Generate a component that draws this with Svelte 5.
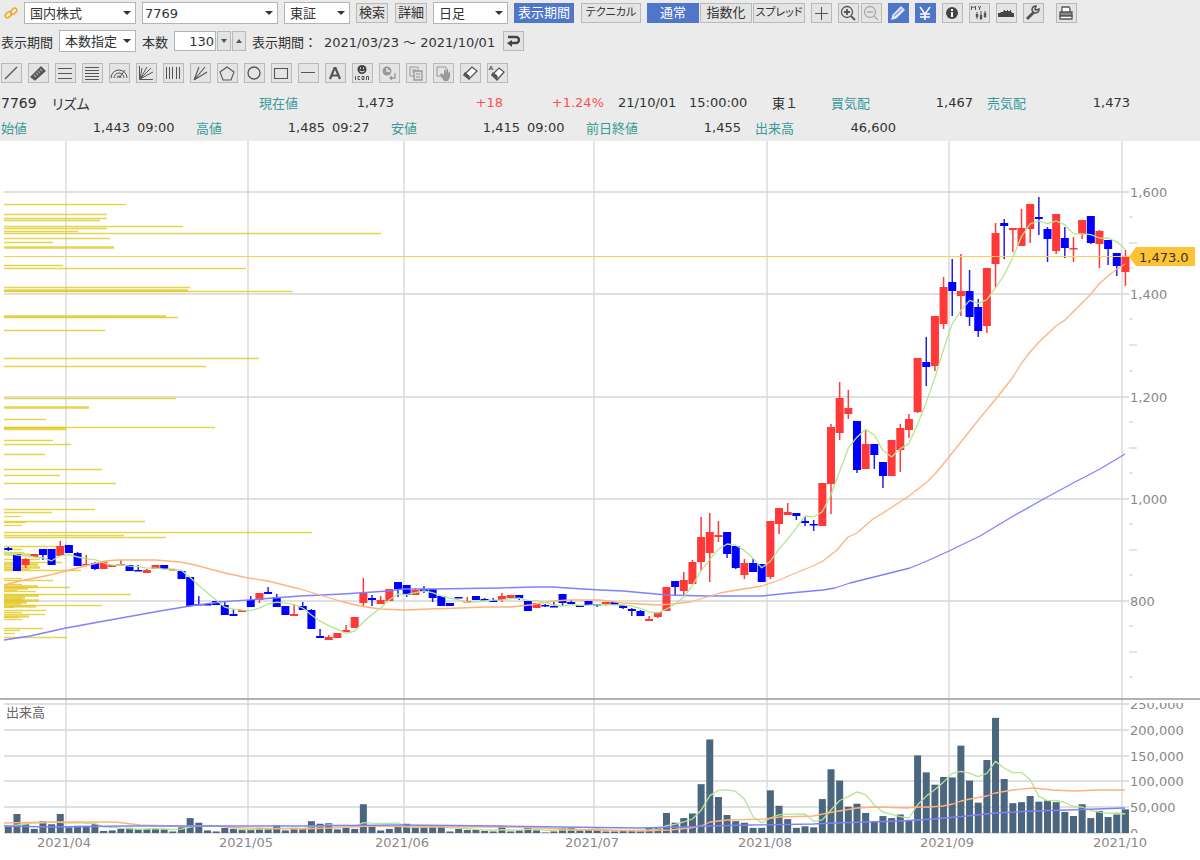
<script lang="ts">
  type Candle = [dir: 'u' | 'd', high: number, top: number, bottom: number, low: number];
  type Tool = { label: string; icon: string; state?: 'on' | 'off' };

  // Horizontal position of a trading day on the chart
  const STEP = 8.66;
  const dayX = (i: number) => 8.3 + i * STEP;

  const VOLUME_BASE = 833;
  const VOLUME_SCALE = 0.514; // chart units per thousand shares

  const tools: Tool[] = [
    { label: 'トレンドライン', icon: '<path d="M3 15 15 3"/>' },
    { label: 'チャネル', icon: '<path d="M2 13 12 3l4 4L6 16z" fill="#555"/><path d="m5 11 2 2m0-4 2 2m0-4 2 2m0-4 2 2" stroke="#aaa"/>' },
    { label: '三等分線', icon: '<path d="M2 4.500h14M2 9.500h14M2 14.500h14" stroke-width="1"/>' },
    { label: 'リトレースメント', icon: '<path d="M2 3.500h14M2 6.500h14M2 9.500h14M2 12.500h14M2 15.500h14" stroke-width="1"/>' },
    { label: 'ファン・アーク', icon: '<path d="M1 14a8 8 0 0 1 16 0M4 14a5 5 0 0 1 10 0M7 14a2 2 0 0 1 4 0M9 14l6-8" stroke-width="1"/>' },
    { label: 'ギャンアングル', icon: '<path d="M2.500 2v13.500H16M3 15 5 4M3 15l7-12M3 15 14 4M3 15l13-7" stroke-width="1"/>' },
    { label: 'タイムゾーン', icon: '<path d="M2.500 3v12M5.500 3v12M8.500 3v12M12.500 3v12M15.500 3v12" stroke-width="1"/>' },
    { label: 'ファンライン', icon: '<path d="M3 16 8 3M3 16 14 3M3 16l13-8" stroke-width="1.1"/>' },
    { label: '五角形', icon: '<path d="m9 3 7 5-3 8H5L2 8z" stroke-width="1.1"/>' },
    { label: '円', icon: '<circle cx="9" cy="9" r="6"/>' },
    { label: '四角形', icon: '<path d="M2.500 4.500h13v10h-13z" stroke-width="1.1"/>' },
    { label: '水平線', icon: '<path d="M2 8.500h14" stroke-width="1"/>' },
    { label: 'テキスト', icon: '<path d="M4 15 8.500 4h1L14 15M6 11.500h6" stroke-width="2.200"/>' },
    {
      label: 'アイコン',
      icon: '<circle cx="9" cy="5.500" r="4.500" fill="#444" stroke="none"/><path d="M7.500 3.500V5m3-1.500V5M6.500 7q2.500 2 5 0" stroke="#eee" stroke-width="1"/><path d="M2.500 12v4M7 12.500H5v3h2M9 12.500h2v3H9zM13.500 16v-3.500h2V16" stroke-width="1"/>'
    },
    { label: '元に戻す', icon: '<circle cx="7" cy="7" r="4.500" fill="#999" stroke="none"/><path d="M7 4v3h3" stroke="#eee"/><path d="M15 9v5h-5m2-2-2 2 2 2" stroke="#999"/>', state: 'off' },
    { label: 'コピー', icon: '<path d="M3 3h8v9H3zM5 6h4M5 8h3" stroke="#999" stroke-width="1"/><path d="M7 7h8v9H7z" fill="#ddd" stroke="#999"/><path d="M9 10h4m-4 3h4" stroke="#999" stroke-width="1"/>', state: 'off' },
    { label: '移動', icon: '<path d="M3 3h9v9H3z" stroke="#999" stroke-width="1"/><path d="m7 9 3 2V6h1l1 3 1-4h1v4l2-2v6l-2 4h-4l-4-6z" fill="#999" stroke="none"/>', state: 'off' },
    { label: '消去', icon: '<path d="m3 11 8-8 5 4-8 8z" fill="#fff"/><path d="m3 11 5 4v-3L4 9z" fill="#555"/>' },
    { label: '全消去', icon: '<path d="m4 11 7-7 5 4-7 8z" fill="#fff"/><path d="m4 11 5 4v-3L5 9z" fill="#555"/><path d="m1 6 2-4 2 4M2 5h2" stroke-width="1"/>' }
  ];

  const zoomTools: Tool[] = [
    { label: '拡大', icon: '<circle cx="8" cy="8" r="5.500"/><path d="M8 5v6M5 8h6m1 4 4 4" stroke-width="1.8"/>' },
    { label: '縮小', icon: '<circle cx="8" cy="8" r="5.500" stroke="#aaa"/><path d="M5 8h6m1 4 4 4" stroke="#aaa"/>', state: 'off' }
  ];

  const viewTools: Tool[] = [
    { label: '描画', icon: '<path d="m3 15 1-4 8-8 3 3-8 8z" fill="#dfe7ff" stroke="#dfe7ff"/><path d="m5 12 8-7" stroke="#86a0dc"/>', state: 'on' },
    { label: '現在値ライン', icon: '<path d="m4 3 5 7 5-7M9 9v7M4 10h10M4 13h10" stroke="#fff" stroke-width="1.5"/>', state: 'on' },
    { label: '情報', icon: '<circle cx="9" cy="9" r="6" fill="#444" stroke="none"/><path d="M9 8v5M9 5v2" stroke="#fff" stroke-width="2"/>' },
    {
      label: 'マイチャート',
      icon: '<path d="M1.500 6V2l2 2 2-2v4M8 2l1.500 2L11 2M9.500 4v2" stroke-width="1"/><path d="M7 8v7m4-8v9m4-9v7" stroke-width="1"/><path d="M7 10v3m4-2v4m4-6v4" stroke-width="2.4"/>'
    },
    { label: '価格帯別出来高', icon: '<path d="M1 13V9h2l1-1h2l1-2h1v1h2V6h1v1h2V6h1v2h1v1h2v4z" fill="#444" stroke="none"/>' },
    { label: '設定', icon: '<path d="m3 15 7-7" stroke-width="3"/><path d="M15 5a3.500 3.500 0 1 1-3-3l-1 3 1 1z" fill="#ddd" stroke-width="1.600"/>' }
  ];

  const printIcon = '<path d="M5 8V3h7l1 2v3" fill="#fff"/><path d="M3 8h12v4H3z" fill="#888"/><path d="M3 12h12v3H3z" fill="#fff"/>';

  const candles: Candle[] = [
    ['d', 547, 548, 550, 551], ['d', 554, 554, 571, 571], ['u', 558, 559, 565, 568], ['u', 554, 554, 557, 557],
    ['d', 549, 549, 555, 560], ['d', 549, 549, 565, 565], ['u', 541, 546, 556, 556], ['d', 545, 545, 553, 553],
    ['d', 552, 553, 566, 566], ['u', 555, 564, 565, 565], ['d', 562, 563, 569, 570], ['u', 562, 562, 569, 569],
    ['u', 565, 565, 567, 567], ['u', 560, 564, 565, 565], ['d', 565, 565, 571, 571], ['d', 565, 570, 571, 571],
    ['u', 569, 570, 573, 573], ['u', 565, 565, 569, 569], ['d', 565, 565, 569, 569], ['u', 569, 569, 570, 570],
    ['d', 571, 571, 579, 579], ['d', 577, 577, 606, 607], ['d', 596, 604, 605, 605], ['d', 603, 604, 605, 605],
    ['d', 601, 601, 605, 605], ['d', 602, 605, 615, 615], ['d', 609, 614, 616, 616], ['u', 610, 610, 612, 612],
    ['d', 596, 600, 607, 607], ['u', 593, 593, 600, 603], ['d', 587, 592, 594, 594], ['d', 594, 597, 607, 607],
    ['d', 606, 606, 615, 615], ['u', 605, 614, 616, 616], ['d', 602, 606, 610, 610], ['d', 609, 610, 629, 629],
    ['d', 629, 636, 638, 638], ['u', 635, 637, 640, 640], ['u', 633, 633, 638, 638], ['u', 625, 630, 632, 632],
    ['u', 617, 617, 628, 628], ['u', 578, 593, 603, 606], ['d', 595, 598, 600, 606], ['u', 596, 600, 604, 604],
    ['u', 589, 589, 601, 601], ['d', 582, 582, 589, 597], ['d', 585, 585, 595, 597], ['u', 588, 590, 595, 595],
    ['d', 586, 589, 591, 593], ['d', 589, 589, 598, 602], ['d', 596, 596, 606, 606], ['d', 603, 603, 606, 606],
    ['d', 597, 597, 598, 598], ['u', 597, 601, 602, 602], ['d', 596, 596, 600, 600], ['d', 598, 599, 600, 600],
    ['d', 598, 600, 602, 602], ['u', 593, 596, 600, 602], ['u', 595, 595, 598, 598], ['d', 595, 595, 598, 600],
    ['d', 601, 601, 611, 611], ['u', 603, 603, 608, 608], ['d', 604, 605, 606, 607], ['d', 602, 606, 607, 607],
    ['d', 594, 594, 603, 606], ['d', 600, 602, 604, 604], ['d', 605, 605, 607, 607], ['d', 601, 601, 605, 605],
    ['d', 604, 604, 605, 607], ['u', 602, 602, 604, 606], ['d', 602, 602, 605, 605], ['d', 605, 605, 608, 609],
    ['d', 608, 609, 611, 616], ['d', 610, 611, 616, 616], ['u', 616, 619, 621, 621], ['u', 612, 612, 617, 618],
    ['u', 587, 587, 611, 611], ['d', 581, 581, 587, 595], ['u', 572, 580, 591, 596], ['u', 560, 562, 584, 584],
    ['u', 517, 537, 562, 571], ['u', 513, 532, 553, 582], ['u', 521, 535, 537, 542], ['d', 532, 532, 554, 558],
    ['d', 546, 546, 568, 569], ['u', 559, 563, 575, 579], ['d', 559, 563, 572, 572], ['d', 564, 564, 582, 582],
    ['u', 521, 521, 577, 579], ['u', 508, 508, 524, 534], ['u', 503, 512, 515, 515], ['d', 513, 513, 516, 520],
    ['d', 517, 521, 523, 526], ['d', 520, 524, 525, 531], ['u', 483, 483, 526, 526], ['u', 424, 427, 484, 514],
    ['u', 382, 398, 433, 440], ['u', 390, 408, 414, 419], ['d', 421, 421, 470, 473], ['u', 430, 444, 469, 469],
    ['d', 444, 444, 455, 469], ['d', 462, 462, 476, 488], ['u', 440, 440, 476, 476], ['u', 424, 428, 450, 472],
    ['u', 414, 419, 430, 438], ['u', 358, 358, 412, 413], ['d', 337, 362, 367, 386], ['u', 316, 316, 366, 371],
    ['u', 277, 287, 324, 329], ['d', 259, 282, 291, 316], ['u', 254, 291, 296, 316], ['d', 270, 291, 317, 326],
    ['d', 299, 307, 331, 337], ['u', 268, 268, 326, 333], ['u', 223, 233, 264, 287], ['d', 219, 223, 226, 259],
    ['u', 228, 228, 230, 252], ['u', 209, 228, 246, 246], ['u', 204, 204, 229, 243], ['d', 197, 217, 219, 235],
    ['d', 227, 229, 239, 262], ['u', 214, 214, 251, 254], ['d', 227, 238, 248, 258], ['u', 237, 248, 249, 262],
    ['u', 220, 220, 234, 239], ['d', 216, 216, 243, 244], ['u', 230, 231, 244, 268], ['d', 240, 240, 249, 265],
    ['d', 253, 253, 266, 276], ['u', 250, 257, 272, 286]
  ];

  // Thousand shares per day
  const volumes = [
    12, 37, 18, 8, 23, 17, 37, 11, 14, 14, 17, 4, 5, 8, 10, 8, 8, 8, 7, 3, 11, 29, 20, 5, 3, 10, 8, 6, 6, 10, 8, 15, 5,
    10, 8, 23, 18, 19, 7, 10, 8, 56, 15, 5, 8, 14, 18, 10, 11, 14, 12, 3, 8, 6, 6, 4, 3, 13, 3, 5, 11, 5, 1, 3, 10, 10,
    5, 6, 8, 3, 3, 6, 6, 6, 10, 10, 39, 20, 29, 38, 95, 182, 70, 35, 23, 20, 10, 10, 83, 53, 27, 10, 13, 11, 66, 124,
    102, 51, 57, 39, 23, 33, 29, 36, 25, 151, 118, 94, 109, 108, 170, 102, 59, 142, 224, 105, 58, 60, 72, 61, 63, 60,
    41, 33, 56, 29, 43, 31, 36, 46
  ];

  // Volume by price: y, right end, line weight
  const profile: [number, number, number?][] = [
    [204, 126], [214, 107], [218, 107], [220, 100], [226, 183], [228, 107], [231, 78], [233, 381], [238, 110],
    [242, 53], [247, 114, 2], [265, 63], [268, 246], [287, 190], [290, 188, 2], [291, 293], [316, 166, 2], [317, 178],
    [330, 105], [358, 259], [366, 206], [398, 176], [407, 89, 2], [419, 46], [427, 215], [428, 66, 3], [440, 53],
    [444, 71], [454, 45], [469, 102], [475, 60], [483, 116], [509, 95], [512, 52], [516, 21], [521, 145], [522, 26],
    [525, 22], [532, 312], [535, 124], [537, 166], [546, 65], [549, 22], [552, 24], [554, 30, 2], [559, 40], [562, 62],
    [564, 38, 2], [567, 40, 2], [569, 30], [570, 81], [578, 22], [580, 53], [584, 22], [586, 38, 2], [587, 70],
    [588, 28, 2], [590, 17], [591, 36], [594, 131], [595, 39, 2], [597, 25, 2], [599, 23, 2], [600, 39, 2],
    [602, 27, 2], [603, 21, 2], [605, 102], [606, 36, 2], [607, 14], [610, 46], [612, 22], [614, 45], [616, 29, 2],
    [617, 18], [619, 22], [628, 43], [630, 20], [633, 15], [637, 67]
  ];

  const months = [
    { x: 66, label: '2021/04' }, { x: 248, label: '2021/05' }, { x: 404, label: '2021/06' },
    { x: 594, label: '2021/07' }, { x: 767, label: '2021/08' }, { x: 949, label: '2021/09' },
    { x: 1122, label: '2021/10' }
  ];
  const priceAxis = [
    { y: 192, label: '1,600' }, { y: 294, label: '1,400' }, { y: 397, label: '1,200' },
    { y: 499, label: '1,000' }, { y: 601, label: '800' }
  ];
  const volumeAxis = [
    { y: 704, label: '250,000' }, { y: 730, label: '200,000' }, { y: 756, label: '150,000' },
    { y: 781, label: '100,000' }, { y: 807, label: '50,000' }, { y: 833, label: '0' }
  ];
  const shortTicks = [217, 268, 319, 371, 422, 473, 524, 575, 626, 677];
  const longTicks = [243, 345, 448, 550, 652];

  const ma25 =
    '4,585 20,581 50,575 66,571 85,566 105,561 118,560 155,560 180,562 195,565 225,573 248,578 268,581 300,589 320,595 343,602 360,606 380,609 405,610 430,609 460,608 485,607 510,607 530,605 553,601 570,600 600,600 623,603 640,604 657,605 673,604 690,602 707,597 720,593 737,590 750,588 762,586 777,581 793,574 813,566 823,561 837,550 848,537 857,533 873,519 883,513 909,496 927,482 935,474 949,457 980,418 995,400 1013,377 1021,364 1030,352 1039,342 1056,326 1065,320 1073,312 1091,294 1099,284 1108,276 1117,269 1125,264';
  const ma75 =
    '4,640 30,636 66,628 110,620 160,611 190,606 220,602 260,599 300,596 343,594 388,591 403,589 433,589 500,588 533,587 553,587 567,588 600,590 623,591 667,595 707,596 762,596 790,593 823,590 835,588 850,583 890,573 910,568 927,561 949,551 980,536 1010,518 1040,501 1075,482 1100,469 1125,454';
  const volumeMa25 =
    '4,823 50,822 115,822 140,825 175,826 215,826 245,828 300,829 330,828 370,826 430,827 500,827 540,828 590,830 640,831 670,830 690,828 701,826 710,822 727,820 765,819 780,817 813,816 833,812 857,808 877,807 907,808 917,807 930,807 943,806 953,804 961,801 970,799 987,796 995,793 1013,790 1033,788 1053,790 1073,791 1100,790 1125,790';
  const volumeMa75 =
    '4,826 50,827 125,826 200,826 300,826 400,825 500,826 560,827 640,828 680,827 710,826 750,825 813,824 833,823 900,821 933,819 967,816 995,813 1033,811 1067,810 1125,808';

  // 5-day average, drawn from the fifth day on
  function average5(values: number[]): string {
    return values
      .map((_, i) => {
        if (i < 4) return '';
        const sum = values.slice(i - 4, i + 1).reduce((a, b) => a + b, 0);
        return `${dayX(i).toFixed(1)},${(sum / 5).toFixed(1)}`;
      })
      .join(' ');
  }

  const ma5 = '4,552 17,555 26,556 34,557 ' + average5(candles.map(([dir, , top, bottom]) => (dir === 'u' ? top : bottom)));
  const volumeMa5 = '4,826 17,825 26,824 34,823 ' + average5(volumes.map((v) => VOLUME_BASE - v * VOLUME_SCALE));

  let mode = $state('通常');
  let bars = $state('130');

  function stepBars(delta: number) {
    bars = String(Number(bars) + delta);
  }
</script>

{#snippet iconButton(tool: Tool)}
  <button class="icon-btn" class:on={tool.state === 'on'} aria-label={tool.label}>
    <svg viewBox="0 0 18 18" fill="none" stroke="#555" stroke-width="1.3">{@html tool.icon}</svg>
  </button>
{/snippet}

<div class="app">
  <header class="panel">
    <div class="row row-main">
      <svg class="link" viewBox="0 0 16 16" fill="none" stroke="#f5a623" stroke-width="1.8">
        <rect x="1" y="7.500" width="8" height="5" rx="2.500" transform="rotate(-45 5 10)" />
        <rect x="7" y="3.500" width="8" height="5" rx="2.500" transform="rotate(-45 11 6)" />
      </svg>
      <div class="picker market"><select aria-label="商品"><option>国内株式</option></select></div>
      <div class="picker code"><select aria-label="銘柄コード"><option>7769</option></select></div>
      <div class="picker exchange"><select aria-label="市場"><option>東証</option></select></div>
      <div class="pair">
        <button class="btn small">検索</button>
        <button class="btn small">詳細</button>
      </div>
      <div class="picker span"><select aria-label="足種"><option>日足</option></select></div>
      <div class="pair">
        <button class="btn wide on">表示期間</button>
        <button class="btn wide kana">テクニカル</button>
      </div>
      <div class="modes">
        {#each ['通常', '指数化', 'スプレッド'] as name}
          <button class="btn mode" class:kana={name === 'スプレッド'} class:on={mode === name} onclick={() => (mode = name)}>{name}</button>
        {/each}
      </div>
      {@render iconButton({ label: '十字カーソル', icon: '<path d="M9.500 3v13M3 9.500h13" stroke-width="1.1"/>' })}
      <div class="zooms">
        {#each zoomTools as tool}{@render iconButton(tool)}{/each}
      </div>
      <div class="icons">
        {#each viewTools as tool}{@render iconButton(tool)}{/each}
      </div>
      <div class="print">{@render iconButton({ label: '印刷', icon: printIcon })}</div>
    </div>

    <div class="row row-range">
      <label for="range-type">表示期間</label>
      <div class="picker range"><select id="range-type"><option>本数指定</option></select></div>
      <label for="bars">本数</label>
      <div class="stepper">
        <input id="bars" type="text" bind:value={bars} />
        <button aria-label="減らす" onclick={() => stepBars(-1)}><span class="down"></span></button>
        <button aria-label="増やす" onclick={() => stepBars(1)}><span class="up"></span></button>
      </div>
      <span class="period">表示期間：</span>
      <span class="dates">2021/03/23 ～ 2021/10/01</span>
      {@render iconButton({ label: '戻す', icon: '<path d="M4 5h8a3 3 0 0 1 0 6H6" stroke-width="2.4" stroke="#444"/><path d="M8 8v7l-5-4z" fill="#444" stroke="none"/>' })}
    </div>

    <div class="row icons">
      {#each tools as tool}{@render iconButton(tool)}{/each}
    </div>

    <div class="quote quote-top">
      <span class="code-no">7769</span>
      <span class="name">リズム</span>
      <span class="key">現在値</span>
      <span class="num">1,473</span>
      <span class="num rise">+18</span>
      <span class="num rise">+1.24%</span>
      <span class="date">21/10/01</span>
      <span>15:00:00</span>
      <span>東１</span>
      <span class="key">買気配</span>
      <span class="num">1,467</span>
      <span class="key ask">売気配</span>
      <span class="num">1,473</span>
    </div>
    <div class="quote quote-bottom">
      <span class="key">始値</span>
      <span class="num">1,443</span>
      <span class="time">09:00</span>
      <span class="key">高値</span>
      <span class="num">1,485</span>
      <span class="time">09:27</span>
      <span class="key">安値</span>
      <span class="num">1,415</span>
      <span class="time">09:00</span>
      <span class="key">前日終値</span>
      <span class="num">1,455</span>
      <span class="key ask">出来高</span>
      <span class="num">46,600</span>
    </div>
  </header>

  <svg class="chart" viewBox="0 141 1200 719" role="img" aria-label="7769 リズム 日足チャート">
    <defs>
      <clipPath id="volume-pane"><rect x="0" y="703" width="1200" height="130" /></clipPath>
    </defs>

    <g class="grid">
      {#each months as month}
        <line x1={month.x} x2={month.x} y1="141" y2="833" />
      {/each}
      {#each [...priceAxis, ...volumeAxis] as level}
        <line x1="4" x2="1129" y1={level.y} y2={level.y} />
      {/each}
      {#each shortTicks as y}
        <line x1="1129" x2="1133" y1={y} y2={y} />
      {/each}
      {#each longTicks as y}
        <line x1="1129" x2="1137" y1={y} y2={y} />
      {/each}
    </g>
    <line class="divider" x1="0" x2="1200" y1="699" y2="699" />

    <g class="profile">
      {#each profile as [y, end, weight = 1]}
        <line x1="4" x2={end} y1={y + 0.5} y2={y + 0.5} stroke-width={weight + 0.3} />
      {/each}
    </g>

    {#each candles as [dir, high, top, bottom, low], i}
      <g class={dir === 'u' ? 'up-day' : 'down-day'}>
        <line x1={dayX(i)} x2={dayX(i)} y1={high} y2={low} />
        <rect x={dayX(i) - 4} y={top} width="8" height={Math.max(bottom - top, 1.5)} />
      </g>
    {/each}

    <polyline class="ma long" points={ma75} />
    <polyline class="ma mid" points={ma25} />
    <polyline class="ma short" points={ma5} />

    <line class="last" x1="4" x2="1130" y1="256.500" y2="256.500" />
    <path class="tag" d="M1129 257l7-10h59v19h-59z" />
    <text class="tag-text" x="1139" y="262">1,473.0</text>

    <g class="volume">
      {#each volumes as v, i}
        <rect x={dayX(i) - 3.5} y={VOLUME_BASE - v * VOLUME_SCALE} width="7" height={v * VOLUME_SCALE} />
      {/each}
    </g>
    <polyline class="ma short" points={volumeMa5} />
    <polyline class="ma mid" points={volumeMa25} />
    <polyline class="ma long" points={volumeMa75} />

    <g class="labels">
      {#each priceAxis as level}
        <text x="1130" y={level.y + 5}>{level.label}</text>
      {/each}
      <g clip-path="url(#volume-pane)">
        {#each volumeAxis as level}
          <text x="1130" y={level.y + 5}>{level.label}</text>
        {/each}
      </g>
      {#each months as month}
        <text x={month.x - 2} y="847" text-anchor="middle">{month.label}</text>
      {/each}
      <text class="pane-name" x="6" y="717">出来高</text>
    </g>
  </svg>
</div>

<style>
  :global(body) {
    margin: 0;
    background: #fff;
  }

  .app {
    font-family: 'DejaVu Sans', 'Noto Sans CJK JP', sans-serif;
    font-size: 13px;
    color: #333;
  }

  .panel {
    background: #ebebeb;
    padding-top: 2px;
    white-space: nowrap;
  }

  .row {
    display: flex;
    align-items: center;
    height: 22px;
  }

  .row-main {
    gap: 6px;
    padding-left: 4px;
    margin-bottom: 6px;
  }

  .row-range {
    gap: 6px;
    padding-left: 1px;
    margin-bottom: 10px;
  }

  .icons {
    display: flex;
    gap: 6px;
  }

  .row.icons {
    padding-left: 1px;
    margin-bottom: 6px;
  }

  .link {
    width: 14px;
    height: 16px;
    flex: none;
  }

  .picker {
    position: relative;
    flex: none;
  }

  .picker::after {
    content: '';
    position: absolute;
    right: 5px;
    top: 9px;
    border: 4px solid transparent;
    border-top-color: #333;
    border-bottom: 0;
    pointer-events: none;
  }

  select {
    appearance: none;
    box-sizing: border-box;
    display: block;
    width: 100%;
    height: 22px;
    padding: 0 14px 0 5px;
    border: 1px solid #b4b4b4;
    border-radius: 0;
    background: #fff;
    font: inherit;
    color: #333;
  }

  .code select {
    padding-left: 2px;
  }

  .market {
    width: 112px;
  }

  .code {
    width: 136px;
  }

  .exchange {
    width: 66px;
  }

  .span {
    width: 75px;
  }

  .range {
    width: 77px;
  }

  .pair {
    display: flex;
    gap: 7px;
  }

  .modes {
    display: flex;
    gap: 1px;
  }

  .zooms {
    display: flex;
    gap: 2px;
  }

  .print {
    display: flex;
    margin-left: 6px;
  }

  .btn,
  .icon-btn,
  .stepper button {
    box-sizing: border-box;
    flex: none;
    height: 20px;
    padding: 0;
    border: 1px solid #b9b9b9;
    background: #e4e4e4;
    font: inherit;
    line-height: 18px;
    color: #333;
    cursor: pointer;
  }

  .btn.small {
    width: 32px;
  }

  .btn.wide {
    width: 60px;
  }

  .btn.mode {
    width: 52px;
  }

  .btn.kana {
    font-size: 11px;
    font-feature-settings: 'palt';
  }

  .btn.on,
  .icon-btn.on {
    border-color: #4f76c8;
    background: #4f76c8;
    color: #fff;
  }

  .icon-btn {
    width: 21px;
  }

  .icon-btn svg {
    display: block;
    width: 18px;
    height: 18px;
  }

  .stepper {
    display: flex;
    gap: 1px;
  }

  .stepper input {
    box-sizing: border-box;
    width: 42px;
    height: 20px;
    padding: 0 1px;
    border: 1px solid #b4b4b4;
    font: inherit;
    color: #333;
    text-align: right;
  }

  .stepper button {
    display: flex;
    align-items: center;
    justify-content: center;
    width: 14px;
  }

  .down,
  .up {
    border: 3px solid transparent;
  }

  .down {
    border-top: 4px solid #555;
    border-bottom: 0;
  }

  .up {
    border-bottom: 4px solid #555;
    border-top: 0;
  }

  .period {
    width: 66px;
  }

  .dates {
    width: 173px;
  }

  .quote {
    display: grid;
    align-items: center;
    height: 25px;
    padding-left: 1px;
  }

  .quote-top {
    grid-template-columns: 51px 207px 60px 75px 109px 101px 85px 83px 59px 60px 82px 75px 82px;
  }

  .quote-bottom {
    grid-template-columns: 60px 69px 66px 60px 69px 66px 60px 69px 66px 75px 80px 75px 80px;
    padding-bottom: 1px;
  }

  .code-no,
  .name {
    font-size: 14px;
  }

  .name {
    font-feature-settings: 'palt';
  }

  .key {
    color: #3a9a9a;
  }

  .num {
    text-align: right;
  }

  .rise {
    color: #ff5050;
  }

  .time {
    padding-left: 7px;
  }

  .date,
  .ask {
    padding-left: 14px;
  }

  .chart {
    display: block;
    width: 100%;
    height: auto;
    font-size: 13px;
  }

  .grid line {
    stroke: #d6d6d6;
    stroke-width: 1.3;
  }

  .divider {
    stroke: #999;
    stroke-width: 1.5;
  }

  .profile line {
    stroke: #e2c822;
    stroke-opacity: 0.8;
  }

  .up-day line {
    stroke: #ff3838;
    stroke-width: 1.5;
  }

  .up-day rect {
    fill: #ff3838;
  }

  .down-day line {
    stroke: #2020f0;
    stroke-width: 1.5;
  }

  .down-day rect {
    fill: #0000ff;
  }

  .ma {
    fill: none;
    stroke-width: 1.3;
    stroke-linejoin: round;
  }

  .ma.short {
    stroke: #b2e690;
  }

  .ma.mid {
    stroke: #ffb27c;
  }

  .ma.long {
    stroke: #8080ff;
  }

  .last {
    stroke: #ffcf4d;
  }

  .tag {
    fill: #ffc233;
  }

  .tag-text {
    fill: #333;
  }

  .volume rect {
    fill: #4b667f;
  }

  .labels text {
    fill: #888;
  }

  .labels .pane-name {
    fill: #666;
  }
</style>
